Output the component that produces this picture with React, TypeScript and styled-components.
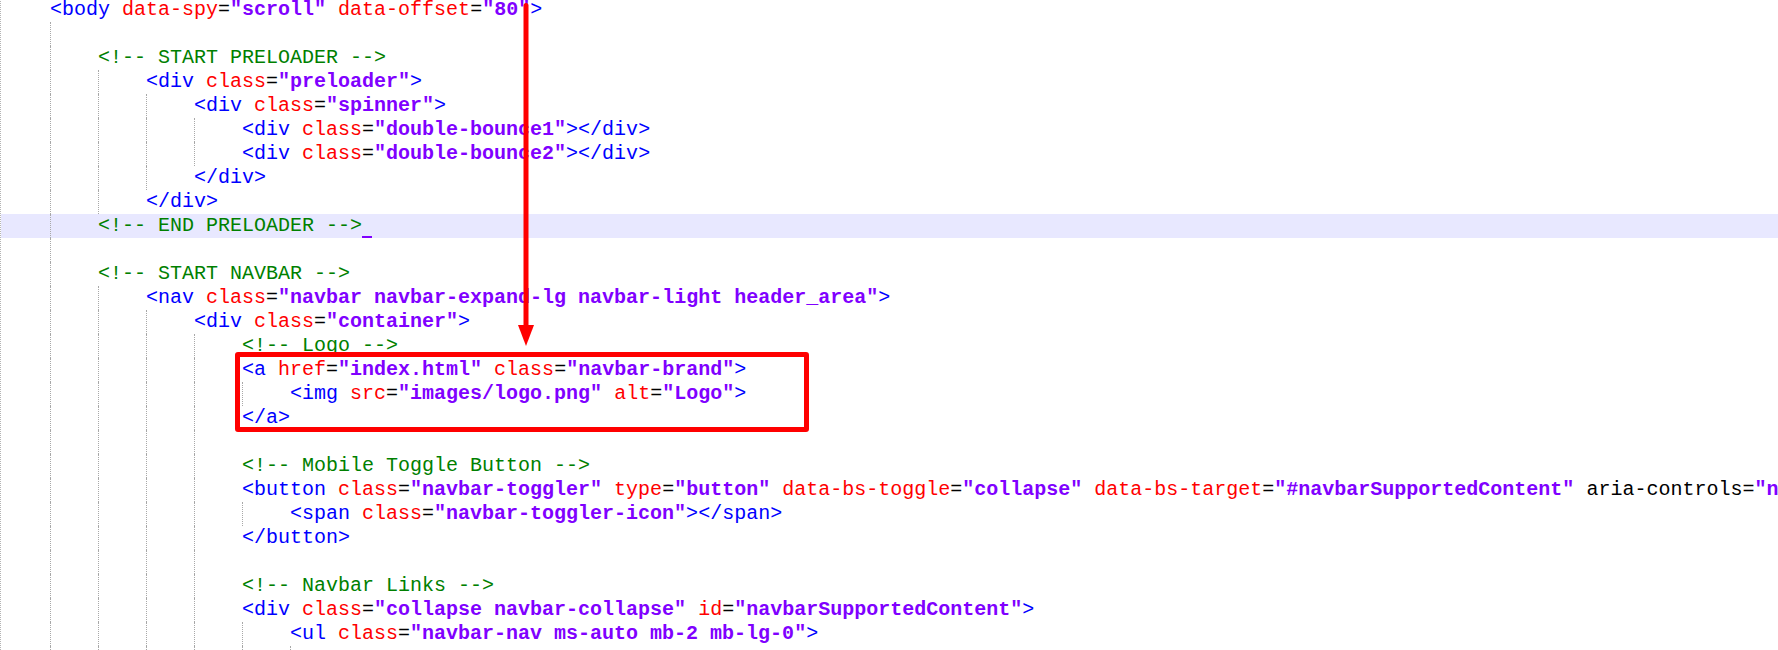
import React from 'react';
import styled, { createGlobalStyle } from 'styled-components';

type Kind = 'tag' | 'attr' | 'unknown' | 'eq' | 'str' | 'cmt' | 'space';

interface Token {
  kind: Kind;
  text: string;
}

interface Line {
  indent: number;
  code?: string;
  current?: boolean;
}

const colors: Record<Kind, string> = {
  tag: '#0000ff',
  attr: '#ff0000',
  unknown: '#000000',
  eq: '#000000',
  str: '#8000ff',
  cmt: '#008000',
  space: '#000000',
};

const lines: Line[] = [
  { indent: 0, code: '<body data-spy="scroll" data-offset="80">' },
  { indent: 1 },
  { indent: 1, code: '<!-- START PRELOADER -->' },
  { indent: 2, code: '<div class="preloader">' },
  { indent: 3, code: '<div class="spinner">' },
  { indent: 4, code: '<div class="double-bounce1"></div>' },
  { indent: 4, code: '<div class="double-bounce2"></div>' },
  { indent: 3, code: '</div>' },
  { indent: 2, code: '</div>' },
  { indent: 1, code: '<!-- END PRELOADER -->', current: true },
  { indent: 1 },
  { indent: 1, code: '<!-- START NAVBAR -->' },
  { indent: 2, code: '<nav class="navbar navbar-expand-lg navbar-light header_area">' },
  { indent: 3, code: '<div class="container">' },
  { indent: 4, code: '<!-- Logo -->' },
  { indent: 4, code: '<a href="index.html" class="navbar-brand">' },
  { indent: 5, code: '<img src="images/logo.png" alt="Logo">' },
  { indent: 4, code: '</a>' },
  { indent: 4 },
  { indent: 4, code: '<!-- Mobile Toggle Button -->' },
  {
    indent: 4,
    code:
      '<button class="navbar-toggler" type="button" data-bs-toggle="collapse" data-bs-target="#navbarSupportedContent" aria-controls="navbarSupportedContent" aria-expanded="false" aria-label="Toggle navigation">',
  },
  { indent: 5, code: '<span class="navbar-toggler-icon"></span>' },
  { indent: 4, code: '</button>' },
  { indent: 4 },
  { indent: 4, code: '<!-- Navbar Links -->' },
  { indent: 4, code: '<div class="collapse navbar-collapse" id="navbarSupportedContent">' },
  { indent: 5, code: '<ul class="navbar-nav ms-auto mb-2 mb-lg-0">' },
  // next line only peeks in at the bottom edge, guides are all that shows
  { indent: 6 },
];

// rough html highlighter, the same styles notepad++ uses
const tokenize = (code: string): Token[] => {
  if (code.startsWith('<!--')) return [{ kind: 'cmt', text: code }];
  const re = /<\/?[\w-]+|\/?>|"[^"]*"|=|[\w-]+|\s+/g;
  const out: Token[] = [];
  let m: RegExpExecArray | null;
  while ((m = re.exec(code))) {
    const s = m[0];
    let kind: Kind;
    if (s.startsWith('<') || s.endsWith('>')) kind = 'tag';
    else if (s.startsWith('"')) kind = 'str';
    else if (s === '=') kind = 'eq';
    else if (/^\s+$/.test(s)) kind = 'space';
    else kind = s.startsWith('aria-') ? 'unknown' : 'attr';
    out.push({ kind, text: s });
  }
  return out;
};

const GlobalStyle = createGlobalStyle`
  html, body {
    margin: 0;
    padding: 0;
    background: #ffffff;
    overflow: hidden;
  }
`;

const Page = styled.div`
  position: relative;
  width: 100%;
  height: 650px;
  overflow: hidden;
  background: #ffffff;
`;

const Editor = styled.div`
  margin-top: -2px;
  border-left: 1px dotted #b4b4b4;
  font-family: "Liberation Mono", "Courier New", monospace;
  font-size: 20px;
`;

const Row = styled.div<{ $current?: boolean }>`
  display: flex;
  height: 24px;
  line-height: 24px;
  padding-left: 49px;
  white-space: pre;
  background: ${(p) => (p.$current ? '#e8e8ff' : 'transparent')};
`;

const Guide = styled.span`
  flex: 0 0 48px;
  height: 24px;
  box-sizing: border-box;
  border-left: 1px dotted #a8a8a8;
`;

const Code = styled.span`
  flex: 0 0 auto;
  white-space: pre;
`;

const Tok = styled.span<{ $kind: Kind }>`
  color: ${(p) => colors[p.$kind]};
  font-weight: ${(p) => (p.$kind === 'str' ? 700 : 400)};
`;

const Caret = styled.span`
  display: inline-block;
  width: 10px;
  height: 2px;
  vertical-align: bottom;
  background: #8000ff;
`;

const Callout = styled.div`
  position: absolute;
  left: 235px;
  top: 352px;
  width: 574px;
  height: 80px;
  box-sizing: border-box;
  border: 5px solid #ff0000;
  border-radius: 3px;
`;

const ArrowSvg = styled.svg`
  position: absolute;
  left: 516px;
  top: 0;
`;

const Arrow = () => (
  <ArrowSvg width="20" height="350" viewBox="0 0 20 350">
    <line x1="10" y1="5.5" x2="10" y2="328" stroke="#ff0000" strokeWidth="5" strokeLinecap="round" />
    <polygon points="2,325 18,325 10,346" fill="#ff0000" />
  </ArrowSvg>
);

export default function App() {
  return (
    <>
      <GlobalStyle />
      <Page>
        <Editor>
          {lines.map((line, i) => (
            <Row key={i} $current={line.current}>
              {Array.from({ length: line.indent }).map((_, g) => (
                <Guide key={g} />
              ))}
              {line.code && (
                <Code>
                  {tokenize(line.code).map((t, j) => (
                    <Tok key={j} $kind={t.kind}>
                      {t.text}
                    </Tok>
                  ))}
                  {line.current && <Caret />}
                </Code>
              )}
            </Row>
          ))}
        </Editor>
        <Arrow />
        <Callout />
      </Page>
    </>
  );
}
